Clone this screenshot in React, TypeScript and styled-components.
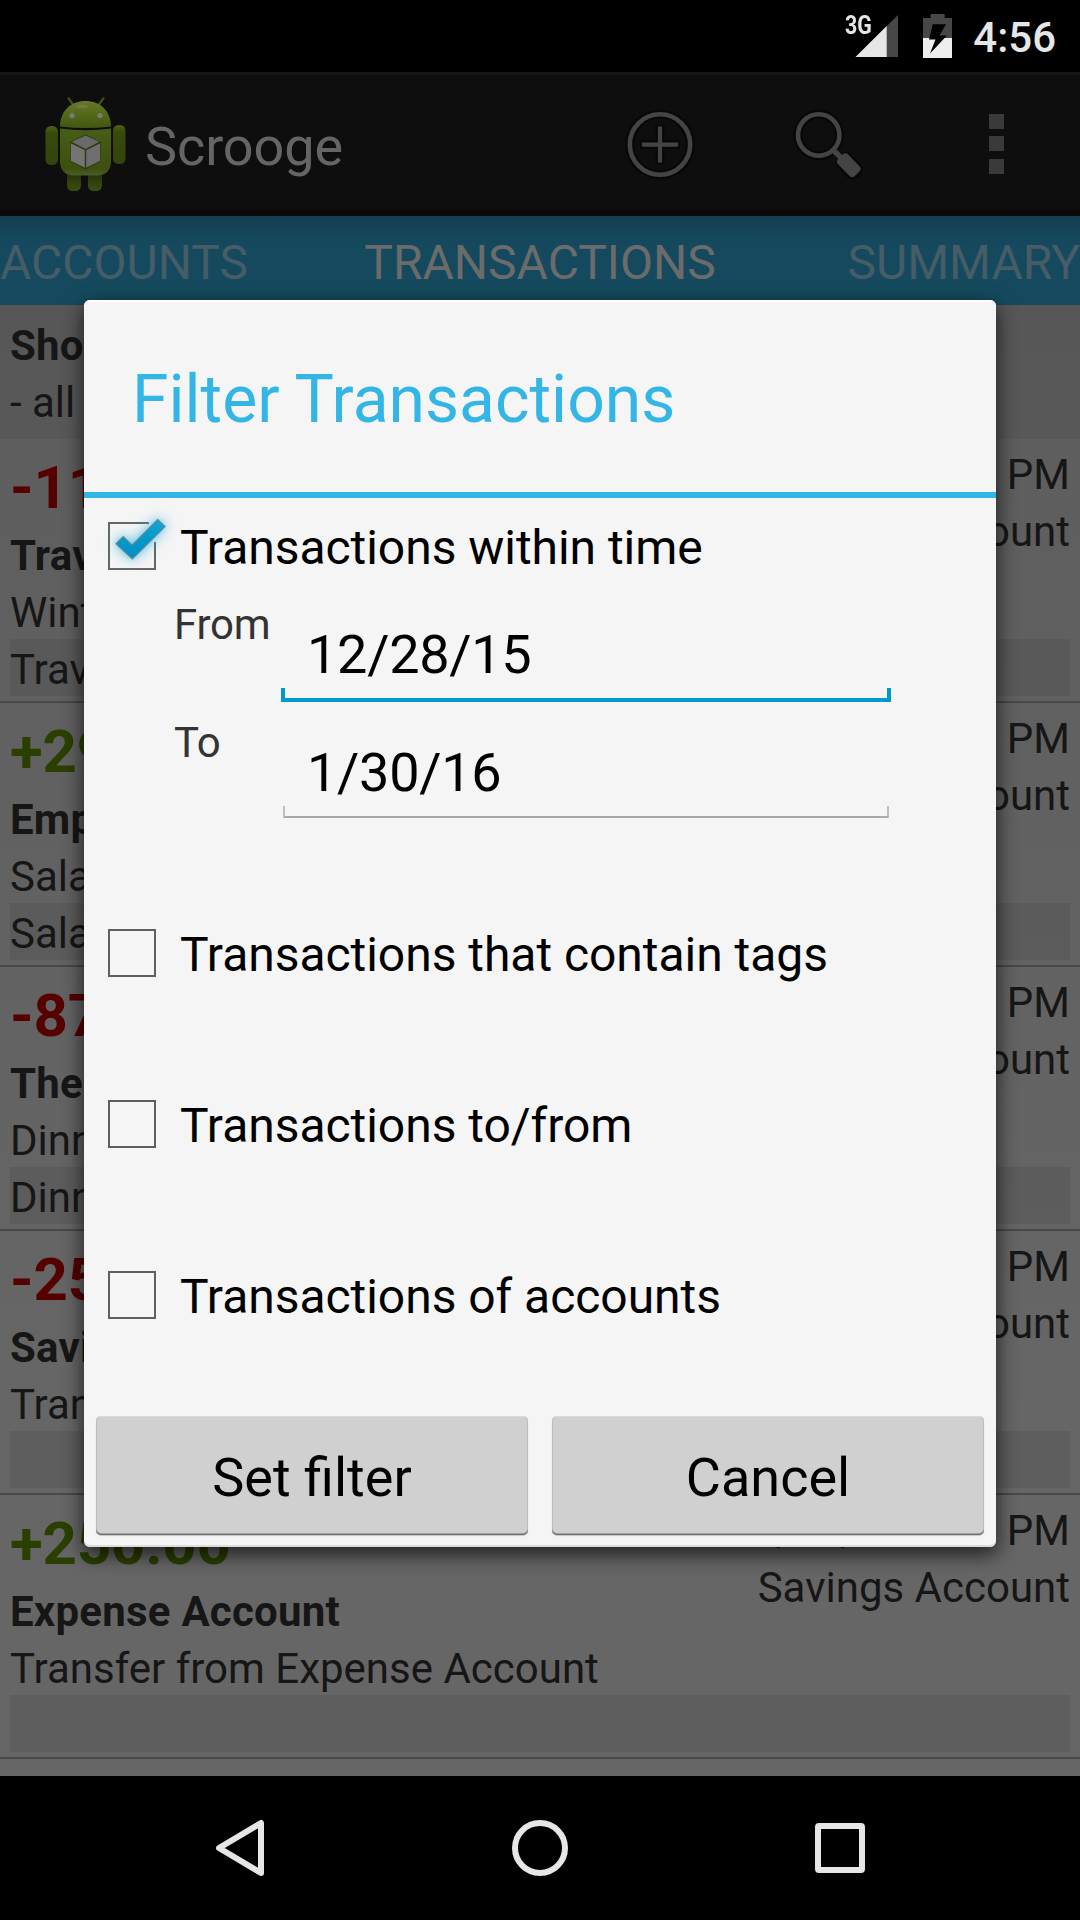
import React from "react";
import styled, { createGlobalStyle } from "styled-components";

const GlobalStyle = createGlobalStyle`
  *, *::before, *::after { box-sizing: border-box; }
  body { margin: 0; background: #000; }
`;

const Screen = styled.div`
  position: relative;
  display: flex;
  flex-direction: column;
  width: 1080px;
  height: 1920px;
  overflow: hidden;
  background: #000;
  font-family: Roboto, "Noto Sans", sans-serif;
  white-space: nowrap;
`;

const StatusBar = styled.header`
  display: flex;
  justify-content: flex-end;
  height: 72px;
  padding-right: 24px;
  color: #e6e6e6;
`;

const NetworkLabel = styled.span`
  width: 26px;
  margin: 9px -16px 0 0;
  font-size: 26px;
  font-weight: 700;
  line-height: 32px;
  transform: scaleX(0.82);
  transform-origin: left;
`;

const StatusIcon = styled.svg<{ $gap: number }>`
  flex: none;
  height: 72px;
  margin-right: ${(p) => p.$gap}px;
`;

const Clock = styled.span`
  padding-top: 3px;
  font-size: 42px;
  font-weight: 500;
  line-height: 69px;
`;

const ActionBar = styled.div`
  display: flex;
  align-items: center;
  height: 144px;
  padding-left: 36px;
  border-top: 3px solid #171717;
  border-bottom: 6px solid #0a0a0a;
  background: #0e0e0e;
`;

const AppTitle = styled.h1`
  flex: 1;
  margin: 0;
  padding: 9px 0 0 10px;
  color: #656565;
  font-size: 54px;
  font-weight: 400;
  letter-spacing: -0.1px;
  line-height: 126px;
`;

const ActionIcon = styled.svg`
  flex: none;
  width: 168px;
  height: 135px;
`;

const Tabs = styled.nav`
  display: grid;
  grid-template-columns: 1fr auto 1fr;
  height: 89px;
  background: linear-gradient(#153e50, #15485c 28%, #154a5e 40%);
`;

const Tab = styled.span<{ $active?: boolean; $end?: boolean }>`
  padding-top: 4px;
  color: ${(p) => (p.$active ? "#6b6b6b" : "#465c66")};
  font-size: 48px;
  line-height: 85px;
  text-align: ${(p) => (p.$end ? "right" : "left")};
`;

const Content = styled.main`
  flex: 1;
  overflow: hidden;
  background: linear-gradient(#5d5d5d, #666 75%);
`;

const Line = styled.div<{ $bold?: boolean; $shaded?: boolean }>`
  height: 57px;
  padding-top: 4px;
  color: #161616;
  background: ${(p) => (p.$shaded ? "rgba(0, 0, 0, 0.07)" : "transparent")};
  font-size: 42px;
  font-weight: ${(p) => (p.$bold ? 700 : 400)};
  letter-spacing: ${(p) => (p.$bold ? "0.23px" : "normal")};
  line-height: 53px;
`;

const FilterSummary = styled.section`
  height: 134px;
  padding: 10px;
  background: rgba(0, 0, 0, 0.06);
`;

const Entry = styled.article`
  display: grid;
  grid-template-columns: auto auto;
  align-content: start;
  justify-content: space-between;
  height: 264px;
  padding: 6px 10px 0;
  border-bottom: 2px solid #484848;
`;

const EntryMain = styled.div`
  height: 194px;
`;

const EntryMeta = styled.div`
  margin-top: -1px;
  text-align: right;
`;

const EntryTag = styled(Line)`
  grid-column: 1 / -1;
`;

const Amount = styled.div<{ $income: boolean }>`
  height: 80px;
  padding-top: 5px;
  color: ${(p) => (p.$income ? "#2b4000" : "#560000")};
  font-size: 60px;
  font-weight: 700;
  letter-spacing: -0.2px;
  line-height: 75px;
`;

const NavBar = styled.footer`
  display: flex;
  justify-content: center;
  height: 144px;
`;

const NavIcon = styled.svg`
  width: 300px;
  height: 144px;
  fill: none;
  stroke: #e6e6e6;
  stroke-width: 6;
  stroke-linejoin: round;
`;

const Dialog = styled.section`
  position: absolute;
  top: 300px;
  left: 84px;
  display: flex;
  flex-direction: column;
  width: 912px;
  height: 1247px;
  border-radius: 6px;
  background: #f5f5f5;
  box-shadow: 0 7px 20px 1px rgba(0, 0, 0, 0.68), inset 0 -2px 0 #dcdcdc, inset 0 2px 0 #fff;
`;

const DialogTitle = styled.h2`
  height: 198px;
  margin: 0;
  padding: 7px 0 0 48px;
  border-bottom: 6px solid #33b5e5;
  color: #33b5e5;
  font-size: 66px;
  font-weight: 400;
  line-height: 185px;
`;

const Options = styled.div`
  display: flex;
  flex: 1;
  flex-direction: column;
  gap: 75px;
`;

const Option = styled.div`
  display: flex;
  align-items: center;
  height: 96px;
  padding-left: 24px;
`;

const Box = styled.span`
  width: 48px;
  height: 48px;
  border: 2px solid #5f5f5f;
`;

const CheckedBox = styled.svg`
  width: 48px;
  height: 48px;
  overflow: visible;
`;

const CheckMark = styled.path`
  filter: drop-shadow(0 0 3px rgba(51, 181, 229, 0.5)) drop-shadow(0 0 7px rgba(51, 181, 229, 0.6));
`;

const OptionLabel = styled.span`
  padding: 3px 0 0 24px;
  color: #000;
  font-size: 48px;
  letter-spacing: -0.04px;
  line-height: 93px;
`;

const DateRow = styled.div`
  display: flex;
  height: 118px;
  padding-left: 90px;
`;

const DateLabel = styled.span`
  width: 107px;
  padding-top: 4px;
  color: #333;
  font-size: 42px;
  letter-spacing: -0.2px;
  line-height: 53px;
`;

const DateField = styled.div<{ $focused?: boolean }>`
  position: relative;
  width: 610px;
  height: 108px;
  padding: 14px 0 0 26px;
  color: #000;
  font-size: 54px;
  letter-spacing: -0.28px;
  line-height: 94px;

  &::after {
    content: "";
    position: absolute;
    right: ${(p) => (p.$focused ? 0 : 2)}px;
    bottom: ${(p) => (p.$focused ? 0 : 2)}px;
    left: ${(p) => (p.$focused ? 0 : 2)}px;
    height: ${(p) => (p.$focused ? 14 : 12)}px;
    border: ${(p) => (p.$focused ? "4px solid #0099cc" : "2px solid #bfbfbf")};
    border-top: 0;
    border-bottom-color: ${(p) => (p.$focused ? "#0099cc" : "#a9a9a9")};
  }
`;

const Buttons = styled.div`
  display: grid;
  grid-template-columns: 1fr 1fr;
  gap: 24px;
  padding: 0 12px 12px;
`;

const Button = styled.button`
  height: 119px;
  padding: 4px 0 0;
  border: 0;
  border-radius: 5px;
  background: #d0d0d0;
  box-shadow: inset 0 -1px 0 #6f6f6f, inset 0 -2px 0 #a0a0a0, inset 0 1px 0 #dadada,
    inset 1px 0 0 #bdbdbd, inset -1px 0 0 #bdbdbd, 0 1px 1px rgba(0, 0, 0, 0.2);
  color: #000;
  font-family: inherit;
  font-size: 54px;
  line-height: 115px;
`;

const Robot = () => (
  <svg width="99" height="135" viewBox="36 75 99 135">
    <defs>
      <linearGradient id="head" x1="0" y1="0" x2="0" y2="1">
        <stop offset="0" stopColor="#66782b" />
        <stop offset="0.5" stopColor="#52691a" />
        <stop offset="1" stopColor="#435710" />
      </linearGradient>
      <linearGradient id="body" x1="0" y1="0" x2="0" y2="1">
        <stop offset="0" stopColor="#485d15" />
        <stop offset="0.85" stopColor="#3d500f" />
        <stop offset="1" stopColor="#4a5b28" />
      </linearGradient>
      <linearGradient id="limb" x1="0" y1="0" x2="0" y2="1">
        <stop offset="0" stopColor="#4c6118" />
        <stop offset="0.2" stopColor="#374a0b" />
        <stop offset="1" stopColor="#33430e" />
      </linearGradient>
      <linearGradient id="leg" x1="0" y1="0" x2="0" y2="1">
        <stop offset="0.3" stopColor="#26330a" />
        <stop offset="0.7" stopColor="#34450d" />
        <stop offset="1" stopColor="#3a4c12" />
      </linearGradient>
    </defs>
    <g stroke="#3f5213" strokeWidth="2.4" strokeLinecap="round">
      <path d="M68.6 98.4L73 104.5M103.4 98.4L99 104.5" />
    </g>
    <g fill="url(#limb)">
      <rect x="45.5" y="126" width="12.5" height="39" rx="5.5" />
      <rect x="113" y="125" width="12.5" height="39" rx="5.5" />
    </g>
    <g fill="url(#leg)">
      <rect x="67" y="168" width="14" height="23" rx="5.5" />
      <rect x="88" y="168" width="14" height="23" rx="5.5" />
    </g>
    <path d="M60 126.5C60 111 71 101 85.5 101S111 111 111 126.5Q85.5 129.5 60 126.5Z" fill="url(#head)" />
    <path d="M60 128.500Q85.5 132 111 128.500V163Q110 174 99 175.500H72Q61 174 60 163Z" fill="url(#body)" />
    <ellipse cx="82" cy="106.5" rx="6" ry="1.8" fill="#7d7a42" opacity="0.7" />
    <circle cx="72" cy="115.5" r="2.6" fill="#7b7b74" />
    <circle cx="100" cy="115.5" r="2.6" fill="#7b7b74" />
    <path d="M85.5 134.5L101 142V161L85.5 169.500L70 161V142Z" fill="#2c3a0a" />
    <path d="M85.5 135.5L99.300 141.800L85.5 149L71.700 141.800Z" fill="#6a6a6a" />
    <path d="M70.800 143.200L84.800 150.300V167.700L70.800 160.700Z" fill="#747474" />
    <path d="M100.200 143.200L86.200 150.300V167.700L100.200 160.700Z" fill="#6e6e6e" />
  </svg>
);

const entries = [
  { amount: "-119.00", title: "Travel Agency", note: "Winter holidays", tag: "Travel", date: "1/30/16 4:55 PM", account: "Expense Account" },
  { amount: "+2900.00", title: "Employer", note: "Salary", tag: "Salary", date: "1/30/16 4:54 PM", account: "Expense Account" },
  { amount: "-87.00", title: "The Restaurant", note: "Dinner", tag: "Dinner", date: "1/30/16 4:53 PM", account: "Expense Account" },
  { amount: "-250.00", title: "Savings Account", note: "Transfer to Savings Account", tag: "", date: "1/30/16 4:52 PM", account: "Expense Account" },
  { amount: "+250.00", title: "Expense Account", note: "Transfer from Expense Account", tag: "", date: "1/30/16 4:52 PM", account: "Savings Account" },
];

export default function App() {
  return (
    <>
      <GlobalStyle />
      <Screen>
        <StatusBar>
          <NetworkLabel>3G</NetworkLabel>
          <StatusIcon $gap={24} width="43" viewBox="855 0 43 72">
            <path d="M898 15V57H855.500Z" fill="#474747" />
            <path d="M886.700 26V57H855.500Z" fill="#e6e6e6" />
          </StatusIcon>
          <StatusIcon $gap={21} width="30" viewBox="922 0 30 72">
            <path d="M923 18H930.500V14H944.700V18H952V38H923Z" fill="#474747" />
            <path d="M923 38H952V58H923Z" fill="#eee" />
            <path d="M932.700 24.300H946L939.500 35.500H947L930 53.500L935.500 39.500H929Z" fill="#000" />
          </StatusIcon>
          <Clock>4:56</Clock>
        </StatusBar>

        <ActionBar>
          <Robot />
          <AppTitle>Scrooge</AppTitle>
          <ActionIcon viewBox="576 75 168 135" fill="none">
            <g stroke="#080808" strokeWidth="9">
              <circle cx="660" cy="144.500" r="30.200" />
              <path d="M640 144.500H680M660 124.500V164.500" />
            </g>
            <g stroke="#444" strokeWidth="4.600">
              <circle cx="660" cy="144.500" r="30.200" />
              <path d="M642 144.700H678M660 126.500V162.500" strokeWidth="4.200" />
            </g>
          </ActionIcon>
          <ActionIcon viewBox="744 75 168 135" fill="none">
            <g stroke="#080808">
              <circle cx="818.700" cy="135" r="20.700" strokeWidth="9" />
              <path d="M845 161.500L853 170" strokeWidth="19" strokeLinecap="round" />
            </g>
            <g stroke="#444">
              <circle cx="818.700" cy="135" r="20.700" strokeWidth="4.600" />
              <path d="M833 150L843 159.500" strokeWidth="5.500" />
            </g>
            <rect x="-11" y="-7" width="24" height="14" rx="4" transform="translate(848 164.500) rotate(46)" fill="#444" />
          </ActionIcon>
          <ActionIcon viewBox="912 75 168 135" fill="#3a3a3a">
            <path d="M989 114h15v15h-15zM989 136h15v15h-15zM989 159h15v15h-15z" />
          </ActionIcon>
        </ActionBar>

        <Tabs>
          <Tab>ACCOUNTS</Tab>
          <Tab $active>TRANSACTIONS</Tab>
          <Tab $end>SUMMARY</Tab>
        </Tabs>

        <Content>
          <FilterSummary>
            <Line $bold>Showing:</Line>
            <Line>- all transactions</Line>
          </FilterSummary>
          {entries.map((e) => (
            <Entry key={e.amount}>
              <EntryMain>
                <Amount $income={e.amount.startsWith("+")}>{e.amount}</Amount>
                <Line $bold>{e.title}</Line>
                <Line>{e.note}</Line>
              </EntryMain>
              <EntryMeta>
                <Line>{e.date}</Line>
                <Line>{e.account}</Line>
              </EntryMeta>
              <EntryTag $shaded>{e.tag}</EntryTag>
            </Entry>
          ))}
        </Content>

        <NavBar>
          <NavIcon viewBox="90 1776 300 144">
            <path d="M219 1848L261 1823V1873Z" />
          </NavIcon>
          <NavIcon viewBox="390 1776 300 144">
            <circle cx="540" cy="1848" r="25" />
          </NavIcon>
          <NavIcon viewBox="690 1776 300 144">
            <rect x="818" y="1826" width="44" height="44" rx="1" />
          </NavIcon>
        </NavBar>

        <Dialog>
          <DialogTitle>Filter Transactions</DialogTitle>
          <Options>
            <div>
              <Option>
                <CheckedBox viewBox="108 522 48 48">
                  <defs>
                    <linearGradient id="check" x1="0" y1="0" x2="0" y2="1">
                      <stop offset="0" stopColor="#14a6d8" />
                      <stop offset="0.5" stopColor="#0099cc" />
                      <stop offset="1" stopColor="#0090c4" />
                    </linearGradient>
                  </defs>
                  <path d="M149 523H109V569H155V542" fill="none" stroke="#666" strokeWidth="2" />
                  <CheckMark
                    d="M116 543.700L123.300 536.700L132 545.300L157.700 519.700L165 526.500L132.300 559Z"
                    fill="url(#check)"
                    stroke="#5f8796"
                    strokeWidth="1.2"
                  />
                </CheckedBox>
                <OptionLabel>Transactions within time</OptionLabel>
              </Option>
              <DateRow>
                <DateLabel>From</DateLabel>
                <DateField $focused>12/28/15</DateField>
              </DateRow>
              <DateRow>
                <DateLabel>To</DateLabel>
                <DateField>1/30/16</DateField>
              </DateRow>
            </div>
            {["Transactions that contain tags", "Transactions to/from", "Transactions of accounts"].map((label) => (
              <Option key={label}>
                <Box />
                <OptionLabel>{label}</OptionLabel>
              </Option>
            ))}
          </Options>
          <Buttons>
            <Button>Set filter</Button>
            <Button>Cancel</Button>
          </Buttons>
        </Dialog>
      </Screen>
    </>
  );
}
